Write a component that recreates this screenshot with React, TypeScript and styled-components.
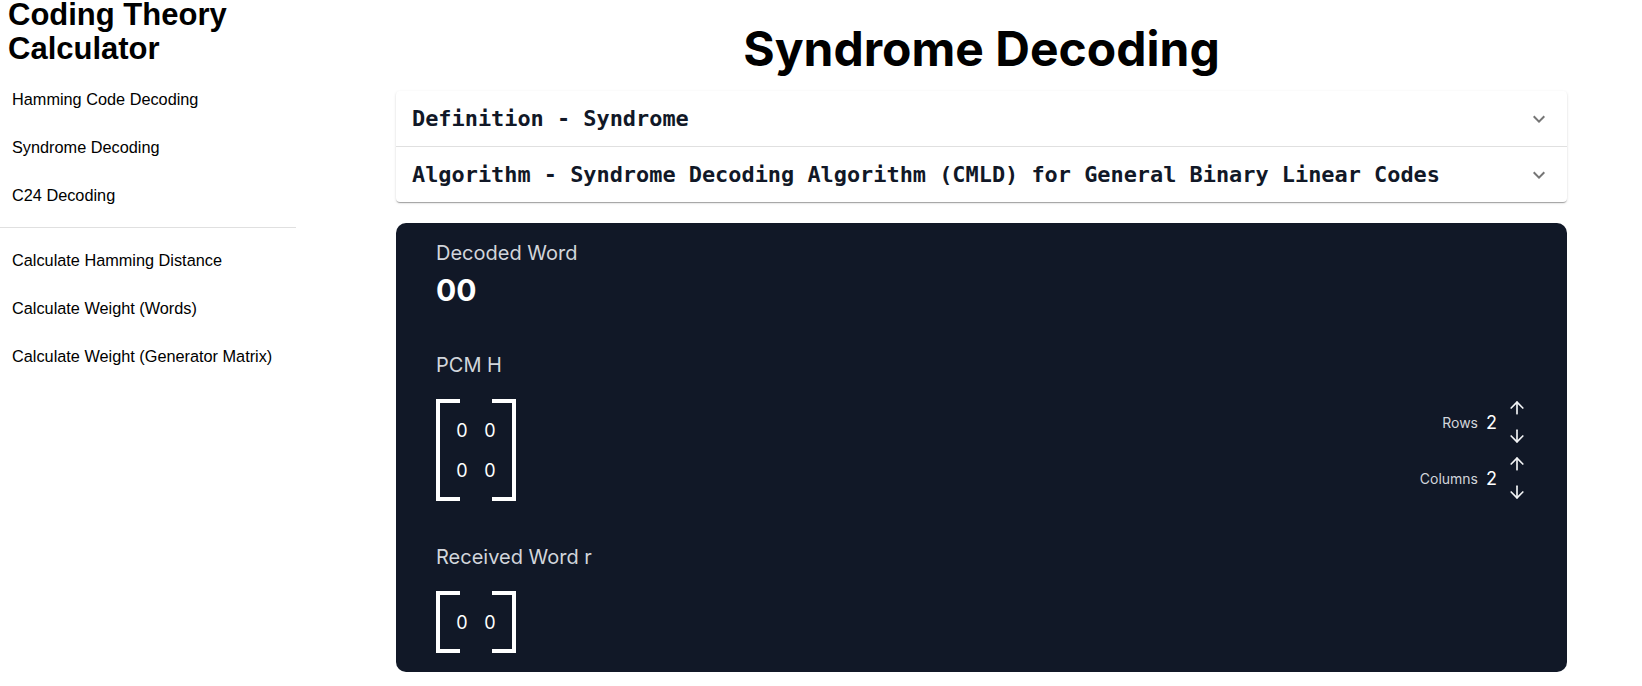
import styled, { createGlobalStyle } from "styled-components";
import { ArrowUp, ArrowDown } from "lucide-react";

const GlobalStyle = createGlobalStyle`
  * { box-sizing: border-box; }
  body {
    margin: 0;
    background: #fff;
  }
`;

const primaryLinks = ["Hamming Code Decoding", "Syndrome Decoding", "C24 Decoding"];
const toolLinks = [
  "Calculate Hamming Distance",
  "Calculate Weight (Words)",
  "Calculate Weight (Generator Matrix)",
];

const sections = [
  "Definition - Syndrome",
  "Algorithm - Syndrome Decoding Algorithm (CMLD) for General Binary Linear Codes",
];

const pcm = [
  [0, 0],
  [0, 0],
];
const received = [[0, 0]];

const ExpandIcon = () => (
  <svg width="24" height="24" viewBox="0 0 24 24" aria-hidden="true">
    <path
      fill="rgba(0,0,0,0.54)"
      d="M16.59 8.59 12 13.17 7.41 8.59 6 10l6 6 6-6z"
    />
  </svg>
);

const MatrixView = ({ data }: { data: number[][] }) => (
  <Matrix $cols={data[0].length}>
    {data.flat().map((v, i) => (
      <Cell key={i}>{v}</Cell>
    ))}
  </Matrix>
);

const StepperControl = ({ label, value }: { label: string; value: number }) => (
  <Stepper>
    <StepLabel>{label}</StepLabel>
    <StepValue>{value}</StepValue>
    <Arrows>
      <ArrowButton aria-label={`increase ${label}`}>
        <ArrowUp size={20} />
      </ArrowButton>
      <ArrowButton aria-label={`decrease ${label}`}>
        <ArrowDown size={20} />
      </ArrowButton>
    </Arrows>
  </Stepper>
);

const App = () => {
  return (
    <>
      <GlobalStyle />
      <Layout>
        <Sidebar>
          <Title>Coding Theory Calculator</Title>
          <NavList $top={9} $bottom={8}>
            {primaryLinks.map((l) => (
              <li key={l}>
                <NavLink href="#">{l}</NavLink>
              </li>
            ))}
          </NavList>
          <Divider />
          <NavList $top={8} $bottom={0}>
            {toolLinks.map((l) => (
              <li key={l}>
                <NavLink href="#">{l}</NavLink>
              </li>
            ))}
          </NavList>
        </Sidebar>

        <Main>
          <PageTitle>Syndrome Decoding</PageTitle>
          <Accordion>
            {sections.map((s, i) => (
              <AccordionRow key={s} $first={i === 0}>
                <AccordionTitle>{s}</AccordionTitle>
                <ExpandIcon />
              </AccordionRow>
            ))}
          </Accordion>

          <Card>
            <Label>Decoded Word</Label>
            <Value>00</Value>

            <Section $gap={43}>
              <Label>PCM H</Label>
              <MatrixRow>
                <MatrixView data={pcm} />
                <Controls>
                  <StepperControl label="Rows" value={2} />
                  <StepperControl label="Columns" value={2} />
                </Controls>
              </MatrixRow>
            </Section>

            <Section $gap={42}>
              <Label>Received Word r</Label>
              <MatrixRow>
                <MatrixView data={received} />
              </MatrixRow>
            </Section>
          </Card>
        </Main>
      </Layout>
    </>
  );
};

const Layout = styled.div`
  display: flex;
  min-height: 686px;
`;

const Sidebar = styled.nav`
  width: 296px;
  flex-shrink: 0;
  font-family: "Liberation Sans", Arial, sans-serif;
`;

const Title = styled.h1`
  margin: -2px 0 0;
  padding: 0 8px;
  font-size: 31px;
  line-height: 34px;
  font-weight: 700;
  color: #000;
`;

const NavList = styled.ul<{ $top: number; $bottom: number }>`
  list-style: none;
  margin: 0;
  padding: ${(p) => p.$top}px 0 ${(p) => p.$bottom}px;
`;

const NavLink = styled.a`
  display: block;
  padding: 15px 12px;
  font-size: 16.3px;
  line-height: 18px;
  color: #000;
  text-decoration: none;
`;

const Divider = styled.hr`
  margin: 0;
  border: 0;
  border-top: 1px solid #e0e0e0;
`;

const Main = styled.main`
  flex: 1;
  padding: 0 75px 15px 100px;
  font-family: Inter, "Noto Sans", sans-serif;
`;

const PageTitle = styled.h2`
  margin: 25px 0 18px;
  text-align: center;
  font-size: 48px;
  line-height: 48px;
  font-weight: 700;
  color: #000;
`;

const Accordion = styled.div`
  background: #fff;
  border-radius: 4px;
  box-shadow: 0px 2px 1px -1px rgba(0, 0, 0, 0.2),
    0px 1px 1px 0px rgba(0, 0, 0, 0.14), 0px 1px 3px 0px rgba(0, 0, 0, 0.12);
`;

const AccordionRow = styled.div<{ $first?: boolean }>`
  display: flex;
  align-items: center;
  justify-content: space-between;
  height: ${(p) => (p.$first ? 55 : 56)}px;
  padding: 0 16px;
  border-top: ${(p) => (p.$first ? "none" : "1px solid rgba(0, 0, 0, 0.12)")};
  cursor: pointer;
`;

const AccordionTitle = styled.span`
  font-family: "DejaVu Sans Mono", "Liberation Mono", monospace;
  font-weight: 700;
  font-size: 21.9px;
  color: #111827;
`;

const Card = styled.section`
  margin-top: 21px;
  background: #111827;
  border-radius: 10px;
  padding: 16px 40px 19px;
  color: #fff;
`;

const Label = styled.div`
  font-size: 20px;
  line-height: 28px;
  color: #d1d5db;
`;

const Value = styled.div`
  margin-top: 5px;
  font-size: 30px;
  line-height: 36px;
  font-weight: 700;
  color: #fff;
`;

const Section = styled.div<{ $gap: number }>`
  margin-top: ${(p) => p.$gap}px;
`;

const MatrixRow = styled.div`
  display: flex;
  align-items: center;
  justify-content: space-between;
  margin-top: 20px;
`;

const Matrix = styled.div<{ $cols: number }>`
  position: relative;
  display: grid;
  grid-template-columns: repeat(${(p) => p.$cols}, 28px);
  grid-auto-rows: 40px;
  padding: 11px 12px;

  &::before,
  &::after {
    content: "";
    position: absolute;
    top: 0;
    bottom: 0;
    width: 20px;
    border: 4px solid #fff;
  }
  &::before {
    left: 0;
    border-right: none;
  }
  &::after {
    right: 0;
    border-left: none;
  }
`;

const Cell = styled.span`
  display: flex;
  align-items: center;
  justify-content: center;
  font-size: 18px;
  color: #fff;
`;

const Controls = styled.div`
  display: flex;
  flex-direction: column;
  margin: -5px 0;
`;

const Stepper = styled.div`
  display: flex;
  align-items: center;
  justify-content: flex-end;
  gap: 8px;
`;

const StepLabel = styled.span`
  font-size: 14px;
  color: #d1d5db;
`;

const StepValue = styled.span`
  font-size: 18px;
  color: #fff;
`;

const Arrows = styled.div`
  display: flex;
  flex-direction: column;
  margin-left: 2px;
`;

const ArrowButton = styled.button`
  display: flex;
  align-items: center;
  justify-content: center;
  height: 28px;
  padding: 0;
  border: 0;
  background: none;
  color: #f3f4f6;
  cursor: pointer;
`;

export default App;
